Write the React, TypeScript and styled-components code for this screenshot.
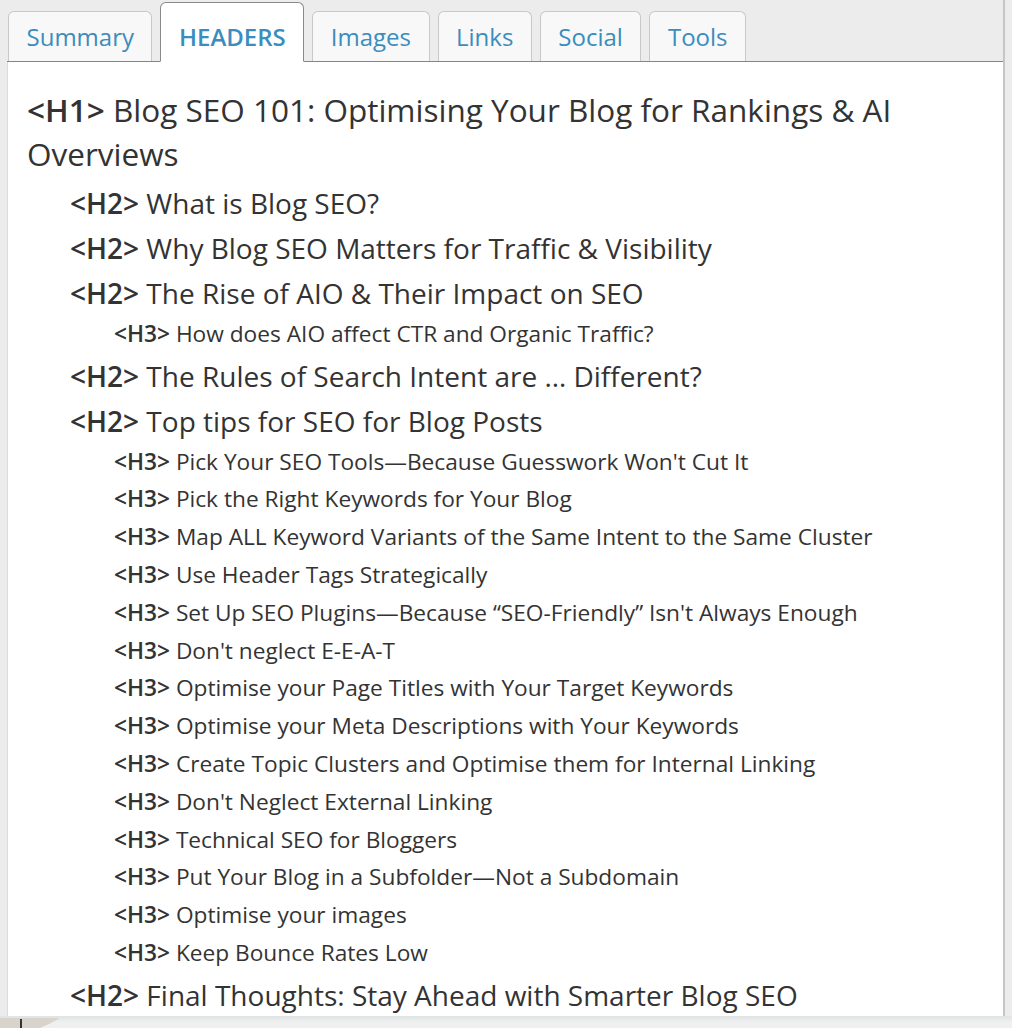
import React from "react";
import styled, { createGlobalStyle } from "styled-components";

const Global = createGlobalStyle`
  html, body { margin: 0; padding: 0; background: #ececec; }
  body { font-family: "Open Sans", "Noto Sans", sans-serif; color: #333; }
`;

const Page = styled.div`
  width: 1012px;
  height: 1028px;
  display: flex;
  flex-direction: column;
  overflow: hidden;
  background: #ececec;
`;

const Window = styled.div`
  display: flex;
  flex-direction: column;
  height: 1016px;
  margin-left: 7px;
  width: 998px;
  border-right: 2px solid #c6c6c6;
  box-sizing: border-box;
`;

const TabBar = styled.div`
  display: flex;
  align-items: flex-end;
  gap: 8px;
  padding-left: 1px;
  height: 61px;
  border-bottom: 1px solid #858585;
  flex-shrink: 0;
`;

const Tab = styled.div<{ $active?: boolean }>`
  box-sizing: border-box;
  height: ${(p) => (p.$active ? "60px" : "50px")};
  margin-bottom: ${(p) => (p.$active ? "-1px" : "0")};
  padding: ${(p) => (p.$active ? "9px" : "0")} 17.5px 0;
  display: flex;
  align-items: center;
  font-size: 24px;
  font-weight: ${(p) => (p.$active ? 600 : 400)};
  color: #3a8dbd;
  background: ${(p) => (p.$active ? "#fff" : "#f8f8f8")};
  border: 1px solid ${(p) => (p.$active ? "#8a8a8a" : "#c8c8c8")};
  border-bottom: ${(p) => (p.$active ? "1px solid #fff" : "none")};
  border-radius: 6px 6px 0 0;
`;

const Panel = styled.div`
  flex: 1;
  background: #fff;
  border-left: 1px solid #dcdcdc;
  padding: 26px 10px 0 19px;
  overflow: hidden;
`;

const Heading = styled.div<{ $level: 1 | 2 | 3 }>`
  color: #333;
  font-size: ${(p) => (p.$level === 1 ? "31.5px" : p.$level === 2 ? "28px" : "22.7px")};
  line-height: ${(p) => (p.$level === 1 ? "44px" : p.$level === 2 ? "36px" : "30px")};
  padding-left: ${(p) => (p.$level === 1 ? 0 : p.$level === 2 ? 43 : 87)}px;
  margin-top: ${(p) => (p.$level === 1 ? "0" : p.$level === 2 ? "9px" : "7.8px")};
  white-space: ${(p) => (p.$level === 1 ? "normal" : "nowrap")};
`;

const Tag = styled.span`
  font-weight: 600;
`;

const BottomStrip = styled.div`
  flex: 1;
  background: linear-gradient(#dfe3e3, #eef0f0 6px, #f0f0f0);
`;

const tabs = ["Summary", "HEADERS", "Images", "Links", "Social", "Tools"];

const items: [1 | 2 | 3, string][] = [
  [1, "Blog SEO 101: Optimising Your Blog for Rankings & AI Overviews"],
  [2, "What is Blog SEO?"],
  [2, "Why Blog SEO Matters for Traffic & Visibility"],
  [2, "The Rise of AIO & Their Impact on SEO"],
  [3, "How does AIO affect CTR and Organic Traffic?"],
  [2, "The Rules of Search Intent are \u2026 Different?"],
  [2, "Top tips for SEO for Blog Posts"],
  [3, "Pick Your SEO Tools\u2014Because Guesswork Won't Cut It"],
  [3, "Pick the Right Keywords for Your Blog"],
  [3, "Map ALL Keyword Variants of the Same Intent to the Same Cluster"],
  [3, "Use Header Tags Strategically"],
  [3, "Set Up SEO Plugins\u2014Because \u201cSEO-Friendly\u201d Isn't Always Enough"],
  [3, "Don't neglect E-E-A-T"],
  [3, "Optimise your Page Titles with Your Target Keywords"],
  [3, "Optimise your Meta Descriptions with Your Keywords"],
  [3, "Create Topic Clusters and Optimise them for Internal Linking"],
  [3, "Don't Neglect External Linking"],
  [3, "Technical SEO for Bloggers"],
  [3, "Put Your Blog in a Subfolder\u2014Not a Subdomain"],
  [3, "Optimise your images"],
  [3, "Keep Bounce Rates Low"],
  [2, "Final Thoughts: Stay Ahead with Smarter Blog SEO"],
];

export default function App() {
  return (
    <Page>
      <Global />
      <Window>
        <TabBar>
          {tabs.map((t) => (
            <Tab key={t} $active={t === "HEADERS"}>
              {t}
            </Tab>
          ))}
        </TabBar>
        <Panel>
          {items.map(([lvl, text], i) => (
            <Heading key={i} $level={lvl}>
              <Tag>{`<H${lvl}>`}</Tag> {text}
            </Heading>
          ))}
        </Panel>
      </Window>
      <BottomStrip>
        <svg width="70" height="12" viewBox="0 0 70 12" style={{ display: "block" }}>
          <path d="M0 2 L60 2 Q50 8 40 12 L0 12 Z" fill="#d8d4cc" />
          <rect x="20" y="3" width="2" height="9" fill="#333" />
        </svg>
      </BottomStrip>
    </Page>
  );
}
